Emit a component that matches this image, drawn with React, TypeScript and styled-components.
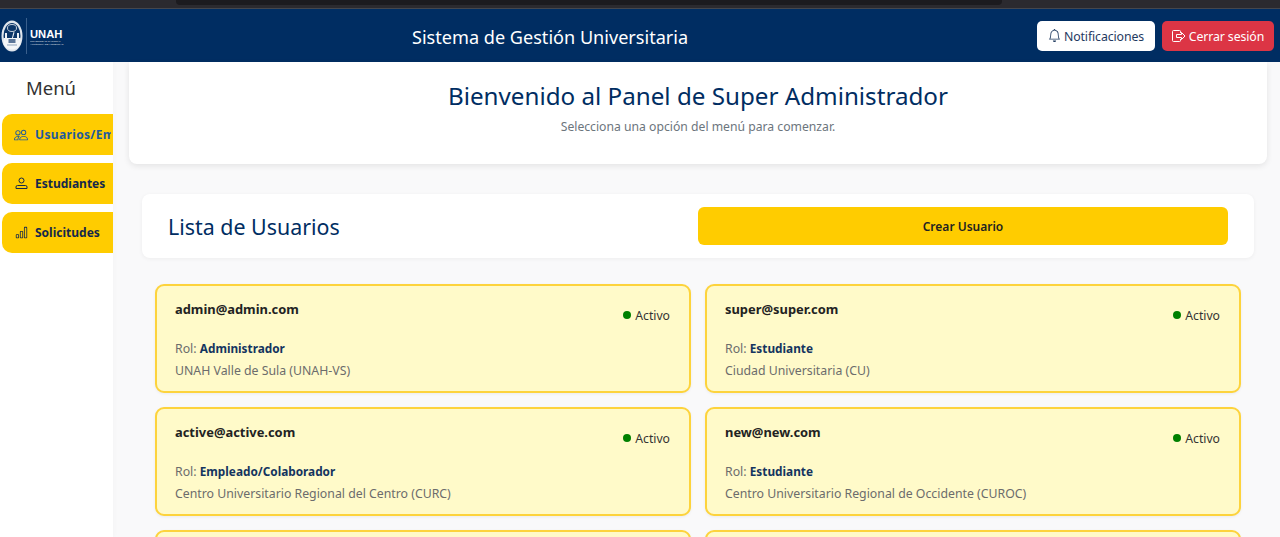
import React from "react";
import styled, { createGlobalStyle } from "styled-components";
import { BsBell, BsPeople, BsBarChart } from "react-icons/bs";

const Global = createGlobalStyle`
  html, body { margin: 0; height: 100%; overflow: hidden; background: #f9f9fa; }
  * { box-sizing: border-box; }
  body { font-family: "Noto Sans", "Open Sans", sans-serif; }
`;

const Page = styled.div`
  width: 1280px;
  height: 537px;
  display: flex;
  flex-direction: column;
  overflow: hidden;
`;

const BrowserStrip = styled.div`
  height: 9px;
  flex: none;
  background: #2b2a2f;
  border-bottom: 1px solid #45474d;
  padding-left: 176px;
`;

const StripInner = styled.div`
  width: 826px;
  height: 5px;
  background: #1c1b1f;
  border-radius: 0 0 4px 4px;
`;

const Header = styled.header`
  height: 53px;
  flex: none;
  background: #002d62;
  display: flex;
  align-items: center;
  padding-right: 6px;
`;

const Logo = styled.div`
  width: 412px;
  flex: none;
  display: flex;
  align-items: center;
  padding-left: 1px;
`;

const LogoDivider = styled.div`
  width: 1px;
  height: 36px;
  background: #3a5f8c;
  margin: 0 3px 0 3px;
`;

const LogoText = styled.div`
  color: #fff;
  display: flex;
  flex-direction: column;
  line-height: 1;
  font-family: "Liberation Sans", sans-serif;
  margin-top: 4px;
`;

const LogoName = styled.span`
  font-size: 11.2px;
  font-weight: 700;
`;

const LogoSub = styled.span`
  font-size: 2.5px;
  line-height: 3px;
  white-space: nowrap;
  opacity: 0.85;
`;

const Title = styled.h1`
  margin: 2px 0 0;
  font-size: 18.1px;
  font-weight: 400;
  color: #fff;
  white-space: nowrap;
  flex: 1;
`;

const Actions = styled.div`
  display: flex;
  gap: 7px;
`;

const HeaderButton = styled.button<{ $danger?: boolean }>`
  height: 30px;
  padding: 2px 0 0;
  border: none;
  border-radius: 5px;
  display: flex;
  align-items: center;
  justify-content: center;
  gap: 3px;
  width: ${(p) => (p.$danger ? "112px" : "118px")};
  font: 400 12.3px "Noto Sans", sans-serif;
  letter-spacing: -0.1px;
  background: ${(p) => (p.$danger ? "#dc3545" : "#fff")};
  color: ${(p) => (p.$danger ? "#fff" : "#1f3a5f")};
  svg { margin-top: -2px; flex: none; }
`;

const Body = styled.div`
  flex: 1;
  display: flex;
  min-height: 0;
`;

const Sidebar = styled.aside`
  width: 113px;
  flex: none;
  background: #fff;
  padding: 0 0 0 2px;
  box-shadow: 2px 0 4px rgba(0, 0, 0, 0.02);
`;

const MenuTitle = styled.div`
  font-size: 18.5px;
  color: #333;
  text-align: center;
  line-height: 26px;
  margin: 13px 13px 13px 0;
`;

const MenuList = styled.nav`
  display: flex;
  flex-direction: column;
  gap: 8px;
`;

const MenuItem = styled.div<{ $active?: boolean }>`
  height: 41px;
  background: #ffcc00;
  border-radius: 10px 0 0 10px;
  display: flex;
  align-items: center;
  overflow: hidden;
  padding: 0 0 0 12px;
  color: ${(p) => (p.$active ? "#1f5a9c" : "#14284b")};
  font-size: 12px;
  font-weight: 700;
  letter-spacing: ${(p) => (p.$active ? "0.35px" : "0")};
  white-space: nowrap;
`;

const MenuIcon = styled.span`
  width: 14px;
  margin-right: 7px;
  flex: none;
  display: flex;
  justify-content: center;
`;

const MenuLabel = styled.span`
  width: 76px;
  flex: none;
  overflow: hidden;
`;

const Main = styled.main`
  flex: 1;
  min-width: 0;
  padding: 0 13px 0 16px;
`;

const Welcome = styled.section`
  height: 102px;
  background: #fff;
  border-radius: 0 0 8px 8px;
  box-shadow: 0 2px 6px rgba(0, 0, 0, 0.09);
  display: flex;
  flex-direction: column;
  align-items: center;
  padding-top: 17px;
  margin-bottom: 30px;
`;

const WelcomeTitle = styled.h2`
  margin: 0;
  font-size: 24.2px;
  line-height: 34px;
  font-weight: 400;
  color: #002d62;
`;

const WelcomeSub = styled.p`
  margin: 5px 0 0;
  font-size: 12.2px;
  line-height: 18px;
  color: #6c757d;
`;

const ListHeader = styled.div`
  height: 64px;
  margin: 0 13px 26px;
  background: #fff;
  border-radius: 8px;
  box-shadow: 0 1px 4px rgba(0, 0, 0, 0.05);
  display: flex;
  align-items: center;
  padding: 0 26px;
`;

const ListTitle = styled.h3`
  margin: 0;
  font-size: 21.4px;
  font-weight: 400;
  color: #002d62;
  width: 530px;
  flex: none;
`;

const CreateButton = styled.button`
  width: 530px;
  height: 38px;
  border: none;
  border-radius: 6px;
  background: #ffcc00;
  color: #222;
  font: 600 12px "Noto Sans", sans-serif;
`;

const Grid = styled.div`
  display: grid;
  grid-template-columns: 536px 536px;
  column-gap: 14px;
  row-gap: 14px;
  margin: 0 26px;
`;

const Card = styled.article`
  height: 109px;
  background: #fffac9;
  border: 2px solid #fdd33c;
  border-radius: 9px;
  padding: 14px 19px 0 18px;
  box-shadow: 0 1px 3px rgba(0, 0, 0, 0.06);
`;

const CardTop = styled.div`
  display: flex;
  justify-content: space-between;
  height: 35px;
`;

const Email = styled.div`
  font-size: 12.9px;
  font-weight: 700;
  color: #222;
  line-height: 18px;
`;

const Status = styled.div`
  display: flex;
  align-items: center;
  gap: 4px;
  font-size: 12.2px;
  color: #333;
  height: 18px;
  margin-top: 6px;
`;

const Dot = styled.span`
  width: 8px;
  height: 8px;
  border-radius: 50%;
  background: #008000;
  margin-top: -1px;
`;

const Line = styled.div`
  font-size: 12.3px;
  line-height: 18px;
  color: #6c6c6c;
  margin-top: 4px;
  white-space: nowrap;
`;

const Role = styled.strong`
  color: #14345f;
  font-size: 11.8px;
  font-weight: 700;
`;

const users = [
  ["admin@admin.com", "Administrador", "UNAH Valle de Sula (UNAH-VS)"],
  ["super@super.com", "Estudiante", "Ciudad Universitaria (CU)"],
  ["active@active.com", "Empleado/Colaborador", "Centro Universitario Regional del Centro (CURC)"],
  ["new@new.com", "Estudiante", "Centro Universitario Regional de Occidente (CUROC)"],
];

const Crest = () => (
  <svg width="22" height="32" viewBox="0 0 22 32" aria-hidden="true">
    <ellipse cx="11" cy="16" rx="10.500" ry="15.500" fill="#dfe5ec" />
    <ellipse cx="11" cy="16" rx="8.500" ry="13" fill="#0b3568" />
    <path d="M2.500 18h17v6c-2 4-5 5.500-8.500 5.500S4.500 28 2.500 24z" fill="#f4f6f8" />
    <ellipse cx="11" cy="8" rx="4.500" ry="3.500" fill="none" stroke="#c5cfdb" strokeWidth="1" />
    <path d="M4 13h2v8H4zM16 13h2v8h-2z" fill="#eef1f5" />
    <path d="M12.500 12l1 .5-2 7h-1z" fill="#eef1f5" />
    <rect x="7.500" y="19" width="7" height="4" fill="#5c7698" />
    <path d="M6 25h10" stroke="#8fa3bb" strokeWidth="1" />
  </svg>
);

const PersonIcon = () => (
  <svg width="13" height="13" viewBox="0 0 13 13" fill="none" stroke="currentColor" strokeWidth="1" aria-hidden="true">
    <circle cx="6.500" cy="3.500" r="2.500" />
    <path d="M2.500 8.500h8a1.500 1.500 0 0 1 1.500 1.500v1.500H1V10a1.500 1.500 0 0 1 1.500-1.500z" />
  </svg>
);

const LogoutIcon = () => (
  <svg width="14" height="12" viewBox="0 0 14 12" fill="none" stroke="currentColor" strokeWidth="1" aria-hidden="true">
    <path d="M8.500 3V1.500a1 1 0 0 0-1-1h-6a1 1 0 0 0-1 1v9a1 1 0 0 0 1 1h6a1 1 0 0 0 1-1V9" />
    <path d="M4.500 4.500h5V2.500L13 6 9.500 9.500v-2h-5z" strokeLinejoin="round" />
  </svg>
);

export default function App() {
  return (
    <Page>
      <Global />
      <BrowserStrip>
        <StripInner />
      </BrowserStrip>
      <Header>
        <Logo>
          <Crest />
          <LogoDivider />
          <LogoText>
            <LogoName>UNAH</LogoName>
            <LogoSub>UNIVERSIDAD NACIONAL</LogoSub>
            <LogoSub>AUTÓNOMA DE HONDURAS</LogoSub>
          </LogoText>
        </Logo>
        <Title>Sistema de Gestión Universitaria</Title>
        <Actions>
          <HeaderButton>
            <BsBell size={13} />
            Notificaciones
          </HeaderButton>
          <HeaderButton $danger>
            <LogoutIcon />
            Cerrar sesión
          </HeaderButton>
        </Actions>
      </Header>
      <Body>
        <Sidebar>
          <MenuTitle>Menú</MenuTitle>
          <MenuList>
            <MenuItem $active>
              <MenuIcon>
                <BsPeople size={14} />
              </MenuIcon>
              <MenuLabel>Usuarios/Empleados</MenuLabel>
            </MenuItem>
            <MenuItem>
              <MenuIcon>
                <PersonIcon />
              </MenuIcon>
              <MenuLabel>Estudiantes</MenuLabel>
            </MenuItem>
            <MenuItem>
              <MenuIcon>
                <BsBarChart size={13} />
              </MenuIcon>
              <MenuLabel>Solicitudes</MenuLabel>
            </MenuItem>
          </MenuList>
        </Sidebar>
        <Main>
          <Welcome>
            <WelcomeTitle>Bienvenido al Panel de Super Administrador</WelcomeTitle>
            <WelcomeSub>Selecciona una opción del menú para comenzar.</WelcomeSub>
          </Welcome>
          <ListHeader>
            <ListTitle>Lista de Usuarios</ListTitle>
            <CreateButton>Crear Usuario</CreateButton>
          </ListHeader>
          <Grid>
            {users.map(([email, role, campus]) => (
              <Card key={email}>
                <CardTop>
                  <Email>{email}</Email>
                  <Status>
                    <Dot />
                    Activo
                  </Status>
                </CardTop>
                <Line>
                  Rol: <Role>{role}</Role>
                </Line>
                <Line>{campus}</Line>
              </Card>
            ))}
            <Card />
            <Card />
          </Grid>
        </Main>
      </Body>
    </Page>
  );
}
